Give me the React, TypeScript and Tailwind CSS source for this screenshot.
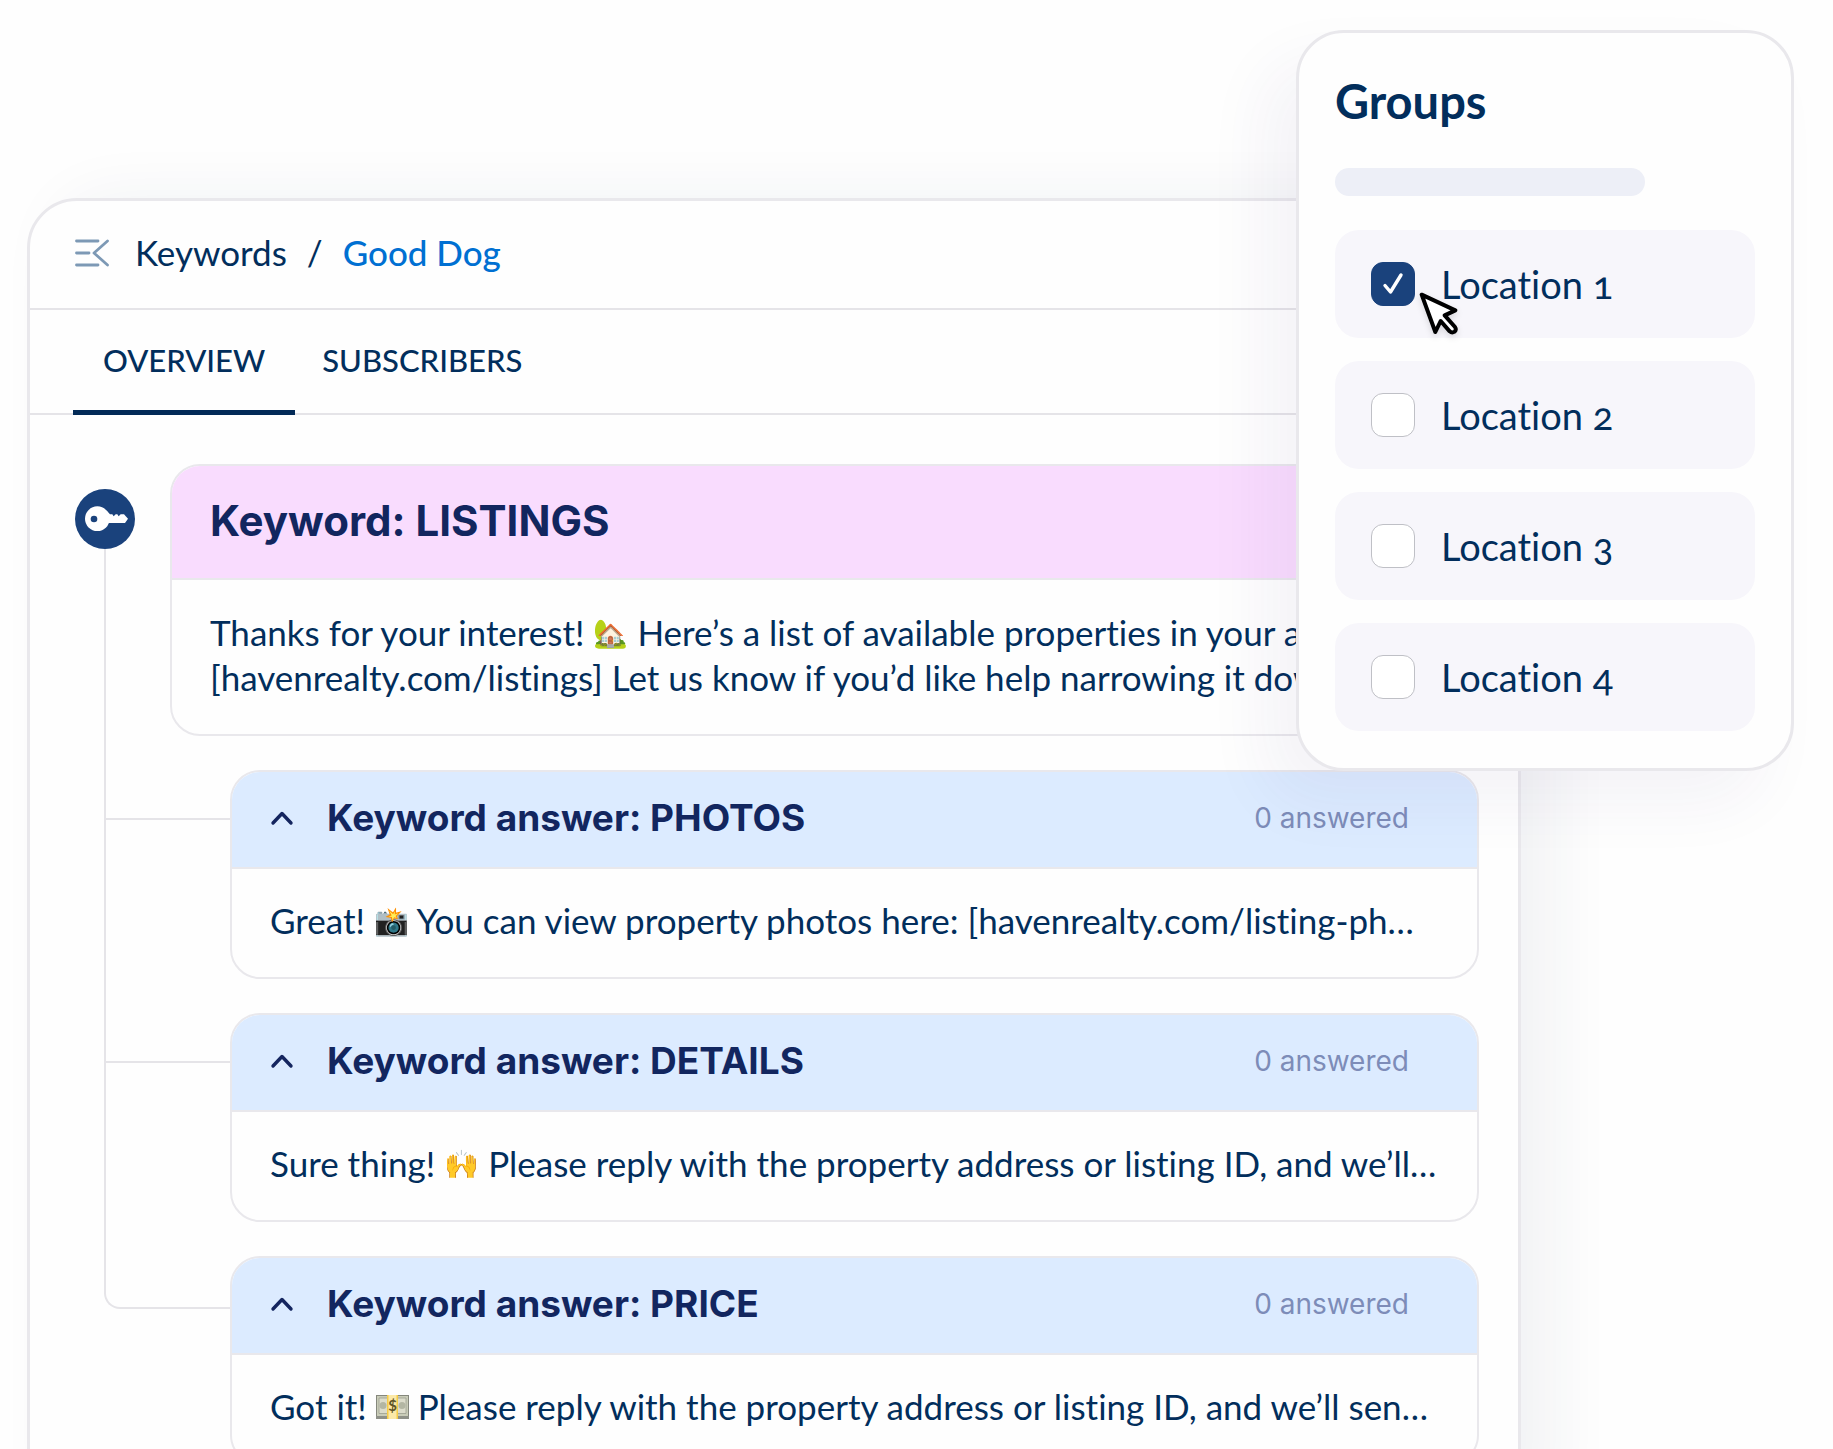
import { useState } from "react";
import type { ReactNode } from "react";

const CollapseIcon = () => (
  <svg viewBox="0 0 34 28" className="h-7 w-[34px]" fill="none" stroke="#7d99b5" strokeWidth="2.8" strokeLinecap="round" aria-hidden="true">
    <path d="M1.5 2H23M1.5 14H14M1.5 26H23" />
    <path d="M32.5 2 19 14l13.5 12" strokeLinejoin="round" />
  </svg>
);

const KeyIcon = () => (
  <svg viewBox="0 0 180 180" className="size-[60px]" aria-hidden="true">
    <circle cx="90" cy="90" r="90" fill="#1a427c" />
    <circle cx="67" cy="89" r="37" fill="#fff" />
    <path d="M94 64 105 76h7l4 6 6-6h5l4 6 6-6h10l12 13-9 13h-50l-8 10Z" fill="#fff" />
    <circle cx="57" cy="90" r="10" fill="#1a427c" />
  </svg>
);

const MoneyIcon = () => (
  <svg viewBox="0 0 33 24" className="mb-2 inline-block h-6 w-[33px]" role="img" aria-label="Money">
    <rect x="0.5" y="0.5" width="32" height="21" fill="#c9ccb8" stroke="#85877c" />
    <path d="M0 21h33v3H0z" fill="#8f9188" />
    <path d="M3 3h27v15.500H3z" fill="#dcdccb" stroke="#9c9f8f" strokeWidth="0.8" />
    <circle cx="7" cy="10.500" r="3.500" fill="#b3b6a3" />
    <circle cx="26" cy="10.500" r="3.500" fill="#b3b6a3" />
    <path d="M11 0h11v24H11z" fill="#f6cb45" />
    <path d="M12.500 0h8v24h-8z" fill="#fbe9a8" />
    <text x="16.500" y="16" textAnchor="middle" fontSize="15" fontWeight="700" fill="#5f5527">$</text>
  </svg>
);

const CursorIcon = () => (
  <svg
    viewBox="175 123 126 144"
    className="pointer-events-none absolute left-[47px] top-[29px] h-12 w-[42px] drop-shadow-md"
    aria-hidden="true"
  >
    <path
      d="M186 134 287 181 255 196 286 231Q291 239 285 245 277 250 270 244L243 213 227 246Z"
      fill="#fff"
      stroke="#000"
      strokeWidth="12"
      strokeLinejoin="round"
    />
  </svg>
);

const Emoji = ({ children }: { children: ReactNode }) => (
  <span className="align-[3px] text-[28px] leading-none">{children}</span>
);

interface Answer {
  name: string;
  before: string;
  emoji: ReactNode;
  after: string;
}

const answers: Answer[] = [
  {
    name: "PHOTOS",
    before: "Great!",
    emoji: <Emoji>📸</Emoji>,
    after: "You can view property photos here: [havenrealty.com/listing-ph…",
  },
  {
    name: "DETAILS",
    before: "Sure thing!",
    emoji: <Emoji>🙌</Emoji>,
    after: "Please reply with the property address or listing ID, and we’ll…",
  },
  {
    name: "PRICE",
    before: "Got it!",
    emoji: <MoneyIcon />,
    after: "Please reply with the property address or listing ID, and we’ll sen…",
  },
];

const locations = ["Location 1", "Location 2", "Location 3", "Location 4"];

const AnswerCard = ({ answer }: { answer: Answer }) => {
  return (
    <article className="min-w-0 flex-1 overflow-hidden rounded-[30px] border-2 border-[#e9e8ec]">
      <div className="flex h-[97px] items-center border-b-2 border-[#e9e8ec] bg-[#dcebff] pb-1 pl-[38px] pr-[68px] font-[Inter,sans-serif]">
        <button type="button" aria-label={`Collapse ${answer.name}`}>
          <svg viewBox="0 0 24 16" className="h-4 w-6" fill="none" stroke="#14255f" strokeWidth="3.4" strokeLinecap="round" strokeLinejoin="round">
            <path d="M3 13 12 3.5 21 13" />
          </svg>
        </button>
        <h3 className="ml-[33px] flex-1 whitespace-nowrap text-[37px] font-bold text-[#12265f]">
          Keyword answer: {answer.name}
        </h3>
        <span className="whitespace-nowrap text-[28px] text-[#7d8cb8]">0 answered</span>
      </div>
      <p className="whitespace-nowrap px-[38px] pb-[34px] pt-7 text-[35px] leading-[46px]">
        {answer.before} {answer.emoji} {answer.after}
      </p>
    </article>
  );
};

const GroupsPanel = () => {
  const [selected, setSelected] = useState<string[]>(["Location 1"]);

  const toggle = (name: string) =>
    setSelected((prev) => (prev.includes(name) ? prev.filter((n) => n !== name) : [...prev, name]));

  return (
    <aside className="absolute right-[39px] top-[30px] w-[498px] rounded-[48px] border-3 border-[#e9e8ec] bg-[#fefefe] px-9 pb-[37px] pt-10 shadow-[-32px_32px_64px_rgba(50,40,110,0.05)]">
      <h2 className="text-[47px] font-bold leading-[56px]">Groups</h2>
      <div className="mt-[39px] h-7 w-[310px] rounded-full bg-[#edeff7]" />
      <ul className="mt-[34px] flex flex-col gap-[23px]">
        {locations.map((name) => (
          <li key={name}>
            <label className="flex h-[108px] items-center gap-[26px] rounded-3xl bg-[#f7f6fb] px-9 text-[38px] oldstyle-nums">
              <span className="relative grid size-11 place-items-center">
                <input
                  type="checkbox"
                  checked={selected.includes(name)}
                  onChange={() => toggle(name)}
                  className="peer col-start-1 row-start-1 size-11 appearance-none rounded-xl border border-[#bfc0c6] bg-white checked:border-[#1a427c] checked:bg-[#1a427c]"
                />
                <svg viewBox="0 0 24 24" className="pointer-events-none invisible col-start-1 row-start-1 size-6 peer-checked:visible" fill="none" stroke="#fff" strokeWidth="3.4" strokeLinecap="round" strokeLinejoin="round">
                  <path d="M4 13.5 9.5 20 20 3" />
                </svg>
                {name === "Location 1" && <CursorIcon />}
              </span>
              {name}
            </label>
          </li>
        ))}
      </ul>
    </aside>
  );
};

const App = () => {
  return (
    <div className="relative h-screen overflow-hidden bg-[#fefefe] pl-[27px] pr-[312px] pt-[198px] font-[Lato,sans-serif] text-[#022e5c] [font-variant-ligatures:none]">
      <main className="rounded-t-[50px] border-3 border-[#e9e8ec] bg-[#fefefe] pb-10 shadow-[32px_0_64px_rgba(30,50,90,0.06)]">
        <header className="flex h-[109px] items-center border-b-2 border-[#e5e4e8] px-[45px] pb-1 text-[35px]">
          <button type="button" aria-label="Collapse menu">
            <CollapseIcon />
          </button>
          <nav className="ml-[26px] flex gap-5" aria-label="Breadcrumb">
            <a href="#keywords">Keywords</a>
            <span>/</span>
            <a href="#good-dog" className="font-medium text-[#0070d2]">Good Dog</a>
          </nav>
        </header>

        {/* Tabs */}
        <div className="flex h-[105px] border-b-2 border-[#e5e4e8] px-[43px] text-[31px] font-medium">
          <button type="button" className="-mb-0.5 border-b-5 border-[#022a57] px-[30px]">OVERVIEW</button>
          <button type="button" className="px-[27px] pb-0.5">SUBSCRIBERS</button>
        </div>

        <section className="flex pl-[45px] pr-[39px] pt-[49px]">
          {/* Key badge with the trunk line down to the last answer */}
          <div className="flex w-[60px] flex-col pt-[25px]">
            <KeyIcon />
            <div className="mb-[156px] ml-[29px] w-[127px] flex-1 rounded-bl-2xl border-b-2 border-l-2 border-[#e5e4e8]" />
          </div>
          <div className="relative ml-[35px] min-w-0 flex-1">
            <article className="overflow-hidden rounded-[30px] border-2 border-[#e9e8ec]">
              <h2 className="flex h-[114px] items-center border-b-2 border-[#e9e8ec] bg-[#f9dcfe] px-[38px] pb-1 font-[Inter,sans-serif] text-[42px] font-bold text-[#12265f]">
                Keyword: LISTINGS
              </h2>
              <p className="whitespace-nowrap px-[38px] pb-[34px] pt-[30px] text-[35px] leading-[45px]">
                Thanks for your interest! <Emoji>🏡</Emoji> Here’s a list of available properties in your area:
                <br />
                [havenrealty.com/listings] Let us know if you’d like help narrowing it down.
              </p>
            </article>

            <div className="-ml-[66px] mt-[34px] flex flex-col gap-[34px]">
              {answers.map((answer, i) => (
                <div key={answer.name} className="flex items-start">
                  <span
                    className={
                      i < answers.length - 1
                        ? "mt-12 h-0.5 w-[126px] bg-[#e5e4e8]"
                        : "w-[126px]"
                    }
                  />
                  <AnswerCard answer={answer} />
                </div>
              ))}
            </div>
          </div>
        </section>
      </main>

      <GroupsPanel />
    </div>
  );
};

export default App;
